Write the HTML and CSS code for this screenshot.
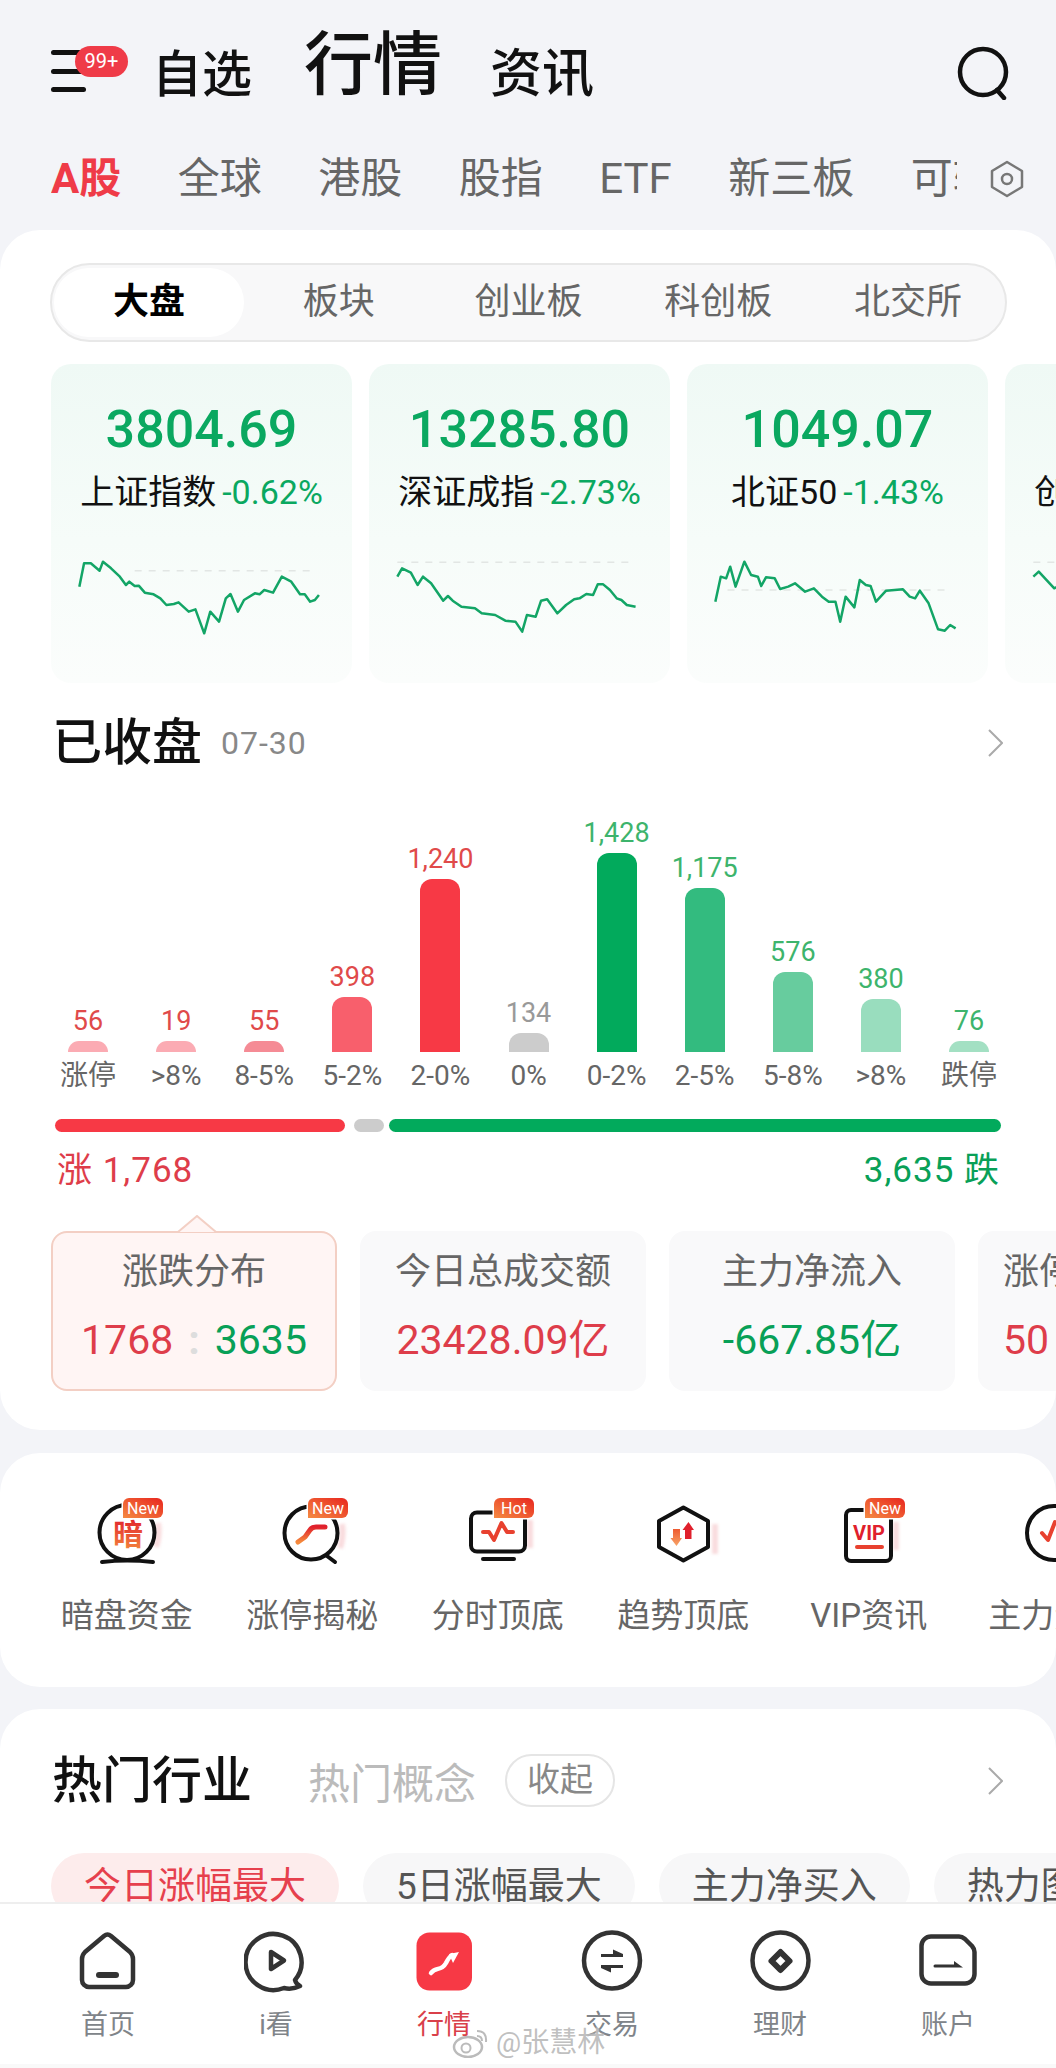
FILE: index.html
```html
<!DOCTYPE html>
<html lang="zh-CN">
<head>
    <meta charset="UTF-8">
    <meta name="viewport" content="width=device-width, initial-scale=1.0">
    <title>行情</title>
    <link rel="stylesheet" href="styles.css">
</head>
<body>

    <header class="top-bar">
        <div class="menu-btn">
            <span></span><span></span><span></span>
            <b class="menu-badge">99+</b>
        </div>
        <a class="top-link top-first">自选</a>
        <a class="top-link top-active">行情</a>
        <a class="top-link top-last">资讯</a>
        <svg class="search-icon" width="54" height="54" viewBox="0 0 54 54">
            <circle cx="27" cy="26" r="23" fill="none" stroke="#111" stroke-width="4.5"/>
            <path d="M41 44 L48 52" fill="none" stroke="#111" stroke-width="4.5" stroke-linecap="round"/>
        </svg>
    </header>

    <nav class="market-tabs">
        <div class="market-scroll">
            <a class="market-active">A股</a>
            <a>全球</a>
            <a>港股</a>
            <a>股指</a>
            <a>ETF</a>
            <a>新三板</a>
            <a>可转债</a>
        </div>
        <svg class="market-set" width="36" height="38" viewBox="0 0 36 38">
            <path d="M18 2 L33 11 V27 L18 36 L3 27 V11 Z" fill="none" stroke="#777" stroke-width="2.5" stroke-linejoin="round"/>
            <circle cx="18" cy="19" r="5" fill="none" stroke="#777" stroke-width="2.5"/>
        </svg>
    </nav>

    <section class="card card-market">
        <div class="segment">
            <a class="segment-active">大盘</a>
            <a>板块</a>
            <a>创业板</a>
            <a>科创板</a>
            <a>北交所</a>
        </div>

        <div class="index-row">
            <div class="index-card">
                <div class="index-num">3804.69</div>
                <div class="index-info"><span>上证指数</span><em>-0.62%</em></div>
                <svg class="spark" viewBox="76 540 446 360" preserveAspectRatio="none">
                    <line class="spark-base" x1="200" y1="662" x2="460" y2="662"/>
                    <polyline class="spark-line" points="118,710 125,640 135,640 148,662 153,635 165,655 178,680 187,705 192,695 200,708 206,707 215,728 228,733 238,745 247,765 258,762 265,757 280,785 290,778 303,850 312,785 325,815 335,745 342,732 353,785 362,750 378,730 385,733 392,720 405,728 418,680 432,695 445,733 452,733 460,755 467,750 473,735"/>
                </svg>
            </div>
            <div class="index-card">
                <div class="index-num">13285.80</div>
                <div class="index-info"><span>深证成指</span><em>-2.73%</em></div>
                <svg class="spark" viewBox="548 540 446 360" preserveAspectRatio="none">
                    <line class="spark-base" x1="590" y1="637" x2="935" y2="637"/>
                    <polyline class="spark-line" points="590,680 597,655 610,668 620,705 628,680 640,700 658,752 665,738 672,752 685,770 705,775 715,790 735,795 750,812 765,815 775,845 782,795 795,800 803,752 812,748 827,790 840,765 852,748 860,745 870,732 880,735 887,703 895,703 905,720 915,745 922,750 930,765 943,770"/>
                </svg>
            </div>
            <div class="index-card">
                <div class="index-num">1049.07</div>
                <div class="index-info"><span>北证50</span><em>-1.43%</em></div>
                <svg class="spark" viewBox="1020 540 446 360" preserveAspectRatio="none">
                    <line class="spark-base" x1="1080" y1="720" x2="1405" y2="720"/>
                    <polyline class="spark-line" points="1062,755 1070,680 1078,685 1084,650 1092,710 1105,635 1115,675 1125,680 1130,708 1137,682 1150,685 1158,717 1170,710 1180,700 1195,725 1208,715 1220,740 1230,755 1240,755 1247,815 1255,740 1268,772 1276,690 1285,705 1292,708 1300,755 1315,722 1340,718 1350,740 1358,745 1365,722 1378,760 1392,838 1402,842 1410,825 1418,835"/>
                </svg>
            </div>
            <div class="index-card">
                <div class="index-num">2356.42</div>
                <div class="index-info"><span>创业板指</span><em>-1.62%</em></div>
                <svg class="spark" viewBox="1492 540 446 360" preserveAspectRatio="none">
                    <line class="spark-base" x1="1534" y1="637" x2="1880" y2="637"/>
                    <polyline class="spark-line" points="1534,680 1542,665 1565,715 1580,700 1600,740"/>
                </svg>
            </div>
        </div>

        <div class="section-head">
            <h2>已收盘</h2>
            <span class="head-date">07-30</span>
            <svg class="chevron" width="15" height="28" viewBox="0 0 15 28"><polyline points="1,1 14,14 1,27"/></svg>
        </div>

        <div class="bars">
            <div class="bar-col"><span class="val-up">56</span><i class="bar b1"></i></div>
            <div class="bar-col"><span class="val-up">19</span><i class="bar b2"></i></div>
            <div class="bar-col"><span class="val-up">55</span><i class="bar b3"></i></div>
            <div class="bar-col"><span class="val-up">398</span><i class="bar b4"></i></div>
            <div class="bar-col"><span class="val-up">1,240</span><i class="bar b5"></i></div>
            <div class="bar-col"><span class="val-flat">134</span><i class="bar b6"></i></div>
            <div class="bar-col"><span class="val-down">1,428</span><i class="bar b7"></i></div>
            <div class="bar-col"><span class="val-down">1,175</span><i class="bar b8"></i></div>
            <div class="bar-col"><span class="val-down">576</span><i class="bar b9"></i></div>
            <div class="bar-col"><span class="val-down">380</span><i class="bar b10"></i></div>
            <div class="bar-col"><span class="val-down">76</span><i class="bar b11"></i></div>
        </div>
        <div class="bar-labels">
            <span>涨停</span><span>&gt;8%</span><span>8-5%</span><span>5-2%</span><span>2-0%</span><span>0%</span><span>0-2%</span><span>2-5%</span><span>5-8%</span><span>&gt;8%</span><span>跌停</span>
        </div>

        <div class="ratio">
            <i class="ratio-up"></i><i class="ratio-flat"></i><i class="ratio-down"></i>
        </div>
        <div class="ratio-text">
            <span class="text-up">涨 1,768</span>
            <span class="text-down">3,635 跌</span>
        </div>

        <div class="stat-row">
            <div class="stat-card stat-active">
                <svg class="stat-arrow" width="40" height="18" viewBox="0 0 40 18"><path d="M1 17 L20 1 L39 17"/></svg>
                <div class="stat-title">涨跌分布</div>
                <div class="stat-value"><span class="text-up">1768</span><b class="stat-colon">:</b><span class="text-down">3635</span></div>
            </div>
            <div class="stat-card">
                <div class="stat-title">今日总成交额</div>
                <div class="stat-value text-up">23428.09亿</div>
            </div>
            <div class="stat-card">
                <div class="stat-title">主力净流入</div>
                <div class="stat-value text-down">-667.85亿</div>
            </div>
            <div class="stat-card stat-left">
                <div class="stat-title">涨停跌停家数</div>
                <div class="stat-value text-up">50</div>
            </div>
        </div>
    </section>

    <section class="card card-tools">
        <div class="tool">
            <svg class="tool-icon" width="80" height="68" viewBox="0 0 80 68">
                <defs>
                    <linearGradient id="tagFill" x1="0" y1="1" x2="1" y2="0">
                        <stop offset="0" stop-color="#f58a42"/>
                        <stop offset="1" stop-color="#e8261f"/>
                    </linearGradient>
                    <linearGradient id="markFill" x1="0" y1="0" x2="0" y2="1">
                        <stop offset="0" stop-color="#e0202c"/>
                        <stop offset="1" stop-color="#f58a3c"/>
                    </linearGradient>
                </defs>
                <path class="icon-glow" d="M71 25 Q73 37 69 49"/>
                <circle class="icon-line" cx="40" cy="34.5" r="27.5"/>
                <path class="icon-line" d="M15 64 Q40 61 66 64"/>
                <text class="icon-char" x="41" y="47">暗</text>
                <path class="tag-bg" d="M36 6 a6 6 0 0 1 6-6 H70 a6 6 0 0 1 6 6 V14 a6 6 0 0 1-6 6 H36 Z"/>
                <text class="tag-text" x="56" y="15.5">New</text>
            </svg>
            <span>暗盘资金</span>
        </div>
        <div class="tool">
            <svg class="tool-icon" width="80" height="68" viewBox="0 0 80 68">
                <path class="icon-glow" d="M70 26 Q72 38 68 50"/>
                <circle class="icon-line" cx="39" cy="35" r="26.5"/>
                <path class="icon-line" d="M55 58 L63 64"/>
                <path class="icon-mark" d="M26 44 L33 39 L38 32 Q40 29 44 29 H53"/>
                <path class="tag-bg" d="M36 6 a6 6 0 0 1 6-6 H70 a6 6 0 0 1 6 6 V14 a6 6 0 0 1-6 6 H36 Z"/>
                <text class="tag-text" x="56" y="15.5">New</text>
            </svg>
            <span>涨停揭秘</span>
        </div>
        <div class="tool">
            <svg class="tool-icon" width="80" height="68" viewBox="0 0 80 68">
                <path class="icon-glow" d="M72 22 V50"/>
                <rect class="icon-line" x="13" y="14.5" width="54" height="39" rx="6"/>
                <path class="icon-line" d="M25 61 H56"/>
                <path class="icon-wave" d="M25 34 H31 L36 42 L43.5 25 L49 34 H55"/>
                <path class="tag-bg" d="M36 6 a6 6 0 0 1 6-6 H70 a6 6 0 0 1 6 6 V14 a6 6 0 0 1-6 6 H36 Z"/>
                <text class="tag-text" x="56" y="15.5">Hot</text>
            </svg>
            <span>分时顶底</span>
        </div>
        <div class="tool">
            <svg class="tool-icon" width="80" height="68" viewBox="0 0 80 68">
                <path class="icon-glow" d="M72 26 V56"/>
                <path class="icon-line" d="M40.4 9.5 L65 23 V49 L40.4 62.5 L16 49 V23 Z"/>
                <path d="M30 31 H37 V40 H39 L33.5 48 L27.5 40 H30 Z" fill="url(#arrowFill)"/>
                <path d="M45.5 24 L51 32 H48.5 V41 H42 V32 H39.5 Z" fill="#e0202c"/>
                <defs>
                    <linearGradient id="arrowFill" x1="0" y1="0" x2="0" y2="1">
                        <stop offset="0" stop-color="#ee5a30"/>
                        <stop offset="1" stop-color="#f7a468"/>
                    </linearGradient>
                </defs>
            </svg>
            <span>趋势顶底</span>
        </div>
        <div class="tool">
            <svg class="tool-icon" width="80" height="68" viewBox="0 0 80 68">
                <path class="icon-glow" d="M67 24 V52"/>
                <path class="icon-line" d="M36 12 H22 a5 5 0 0 0-5 5 V58 a5 5 0 0 0 5 5 H57 a5 5 0 0 0 5-5 V18"/>
                <text class="icon-vip" x="40" y="42">VIP</text>
                <path class="icon-wave" d="M28 49 H53"/>
                <path class="tag-bg" d="M36 6 a6 6 0 0 1 6-6 H70 a6 6 0 0 1 6 6 V14 a6 6 0 0 1-6 6 H36 Z"/>
                <text class="tag-text" x="56" y="15.5">New</text>
            </svg>
            <span>VIP资讯</span>
        </div>
        <div class="tool">
            <svg class="tool-icon" width="80" height="68" viewBox="0 0 80 68">
                <circle class="icon-line" cx="40" cy="35" r="27"/>
                <path class="icon-wave" d="M28 35 L34 42 L41 24"/>
            </svg>
            <span>主力资金</span>
        </div>
    </section>

    <section class="card card-hot">
        <div class="hot-head">
            <h2>热门行业</h2>
            <span class="hot-other">热门概念</span>
            <a class="hot-fold">收起</a>
            <svg class="chevron" width="15" height="28" viewBox="0 0 15 28"><polyline points="1,1 14,14 1,27"/></svg>
        </div>
        <div class="chip-row">
            <a class="chip chip-active">今日涨幅最大</a>
            <a class="chip">5日涨幅最大</a>
            <a class="chip">主力净买入</a>
            <a class="chip">热力图</a>
        </div>
    </section>

    <footer class="bottom-nav">
        <a class="nav-item">
            <svg width="64" height="64" viewBox="0 0 64 64">
                <path class="nav-line" d="M28 6 Q31.5 3 35 6 L54 22 Q57 25 57 29 V50 a7 7 0 0 1-7 7 H13 a7 7 0 0 1-7-7 V29 Q6 25 9 22 Z"/>
                <path class="nav-line nav-fat" d="M23 45 H40"/>
            </svg>
            <span>首页</span>
        </a>
        <a class="nav-item">
            <svg width="64" height="64" viewBox="0 0 64 64">
                <path class="nav-line" d="M51 50 A28 28 0 1 0 40 58 Q48 60 56 56 Q52 54 51 50 Z"/>
                <path class="nav-line" d="M27 22 L40 30.5 L27 39 Z"/>
            </svg>
            <span>i看</span>
        </a>
        <a class="nav-item nav-active">
            <svg width="64" height="64" viewBox="0 0 64 64">
                <rect x="4.5" y="2.5" width="55.5" height="58" rx="13" fill="#f73945"/>
                <path d="M19 43 C24 36 29 42 34 33 C36 29 37 27 40 25" fill="none" stroke="#fff" stroke-width="4.5" stroke-linecap="round"/>
                <path d="M37 24 L47 22 L41 33 Z" fill="#fff"/>
            </svg>
            <span>行情</span>
        </a>
        <a class="nav-item">
            <svg width="64" height="64" viewBox="0 0 64 64">
                <circle class="nav-line" cx="32" cy="30.5" r="28"/>
                <path d="M21 24 H43 V27 H21 Z M33 19.5 L43 24 V25 H33 Z M21 35 H43 V38 H21 Z M31 42.5 L21 38 V37 H31 Z" fill="#333"/>
            </svg>
            <span>交易</span>
        </a>
        <a class="nav-item">
            <svg width="64" height="64" viewBox="0 0 64 64">
                <circle class="nav-line" cx="32.5" cy="30.5" r="28"/>
                <path class="nav-line nav-diamond" d="M32.5 22 L41.5 31 L32.5 40 L23.5 31 Z"/>
            </svg>
            <span>理财</span>
        </a>
        <a class="nav-item">
            <svg width="64" height="64" viewBox="0 0 64 64">
                <path class="nav-line" d="M15 6.5 H43 Q46 6.5 49 9 L56 16 Q58.5 19 58.5 22 V44 a9.5 9.5 0 0 1-9.5 9.5 H15 a9.5 9.5 0 0 1-9.5-9.5 V16 a9.5 9.5 0 0 1 9.5-9.5 Z"/>
                <path d="M19 34.5 H38 V31 L47 37.5 H19 a1.5 1.5 0 0 1 0-3 Z" fill="#333"/>
            </svg>
            <span>账户</span>
        </a>

        <div class="watermark">
            <svg width="38" height="30" viewBox="0 0 38 30">
                <ellipse cx="16" cy="19" rx="14" ry="10" fill="none" stroke="#bbb" stroke-width="2.5"/>
                <circle cx="14" cy="20" r="4.5" fill="none" stroke="#bbb" stroke-width="2"/>
                <path d="M25 3 Q35 3 34 14 M25 8 Q30 8 30 13" fill="none" stroke="#bbb" stroke-width="2"/>
            </svg>
            <span>@张慧林</span>
        </div>
    </footer>

</body>
</html>
```
FILE: styles.css
```css
* {
    box-sizing: border-box;
}

body {
    margin: 0;
    width: 1056px;
    height: 2068px;
    position: relative;
    overflow: hidden;
    background-color: #f3f4f8;
    color: #111;
    font-family: Roboto, "Noto Sans CJK SC", sans-serif;
}

a {
    color: inherit;
    text-decoration: none;
}

h2 {
    margin: 0;
    font-size: 50px;
    font-weight: 500;
    line-height: 50px;
}

/* top bar */
.top-bar {
    height: 100px;
    padding: 0 46px 0 51px;
    display: flex;
    align-items: flex-end;
}

.menu-btn {
    width: 105px;
    height: 42px;
    margin-bottom: 8px;
    position: relative;
    display: flex;
    flex-direction: column;
    justify-content: space-between;
}

.menu-btn span {
    display: block;
    width: 35px;
    height: 5px;
    border-radius: 3px;
    background-color: #111;
}

.menu-badge {
    position: absolute;
    left: 24px;
    top: -4px;
    width: 53px;
    height: 31px;
    border-radius: 16px;
    background-color: #ef3b48;
    color: #fff;
    font-size: 20px;
    font-weight: 400;
    line-height: 31px;
    text-align: center;
}

.top-link {
    font-size: 50px;
    line-height: 50px;
    font-weight: 500;
    margin-right: 48px;
}

.top-first {
    margin-left: -4px;
    margin-right: 52px;
}

.top-active {
    font-size: 69px;
    line-height: 68px;
}

.top-last {
    font-size: 52px;
    line-height: 50px;
    margin-right: 0;
}

.search-icon {
    margin-left: auto;
}

/* market tabs */
.market-tabs {
    margin-top: 59px;
    padding-left: 51px;
    height: 40px;
    display: flex;
    align-items: center;
}

.market-scroll {
    width: 906px;
    overflow: hidden;
    display: flex;
    gap: 56.5px;
    font-size: 42px;
    line-height: 56px;
    color: #666;
    white-space: nowrap;
}

.market-scroll a {
    flex: none;
}

.market-active {
    color: #ef3b48;
    font-weight: 700;
}

.market-set {
    margin-left: 32px;
}

/* cards */
.card {
    background-color: #fff;
    border-radius: 40px;
    overflow: hidden;
}

.card-market {
    margin-top: 31px;
    padding: 33px 0 39px;
}

.segment {
    margin: 0 49px 0 50px;
    height: 79px;
    padding: 3px 2px;
    border: 2px solid #e8e8e8;
    border-radius: 40px;
    background-color: #f8f8f9;
    display: grid;
    grid-template-columns: repeat(5, 1fr);
    font-size: 36px;
    color: #666;
    text-align: center;
}

.segment a {
    line-height: 69px;
}

.segment .segment-active {
    background-color: #fff;
    border-radius: 36px;
    color: #000;
    font-weight: 700;
}

/* index cards */
.index-row {
    margin-top: 22px;
    padding-left: 51px;
    display: flex;
    gap: 17px;
    overflow: hidden;
}

.index-card {
    flex: none;
    width: 301px;
    height: 319px;
    padding-top: 40px;
    border-radius: 20px;
    background: linear-gradient(180deg, #eff9f5 0%, #f6fcf9 55%, #fbfdfc 100%);
    text-align: center;
    white-space: nowrap;
}

.index-num {
    height: 52px;
    font-size: 52px;
    line-height: 52px;
    font-weight: 500;
    color: #0aa860;
}

.index-info {
    height: 40px;
    margin-top: 16px;
    font-size: 34px;
    line-height: 40px;
    color: #111;
}

.index-info em {
    margin-left: 6px;
    font-style: normal;
    font-size: 34px;
    color: #0aa860;
}

.spark {
    display: block;
    width: 301px;
    height: 120px;
    margin-top: 18px;
}

.spark-line {
    fill: none;
    stroke: #13a566;
    stroke-width: 2.5px;
    stroke-linejoin: round;
    vector-effect: non-scaling-stroke;
}

.spark-base {
    stroke: #e2e6e4;
    stroke-width: 1.5px;
    stroke-dasharray: 7 7;
    vector-effect: non-scaling-stroke;
}

/* closed section */
.section-head {
    margin-top: 36px;
    padding: 0 53px 0 52px;
    height: 48px;
    display: flex;
    align-items: center;
}

.head-date {
    margin-left: 19px;
    font-size: 32px;
    letter-spacing: 1px;
    color: #888;
}

.chevron {
    margin-left: auto;
    fill: none;
    stroke: #aaa;
    stroke-width: 2px;
}

.bars {
    height: 285px;
    padding-left: 44px;
    display: grid;
    grid-template-columns: repeat(11, 88.1px);
}

.bar-col {
    display: flex;
    flex-direction: column;
    justify-content: flex-end;
    align-items: center;
    font-size: 27px;
    line-height: 28px;
}

.bar-col span {
    margin-bottom: 6px;
}

.val-up { color: #e04a4a; }
.val-flat { color: #999; }
.val-down { color: #3db46c; }

.bar {
    display: block;
    width: 40px;
    border-radius: 12px 12px 0 0;
}

.b1 { height: 11px; background-color: #fbabb3; }
.b2 { height: 11px; background-color: #fbabb3; }
.b3 { height: 11px; background-color: #f58b95; }
.b4 { height: 55px; background-color: #f85f6c; }
.b5 { height: 173px; background-color: #f73945; }
.b6 { height: 19px; background-color: #ccc; }
.b7 { height: 199px; background-color: #02aa5c; }
.b8 { height: 164px; background-color: #33bb7f; }
.b9 { height: 80px; background-color: #67cc9e; }
.b10 { height: 53px; background-color: #99ddbe; }
.b11 { height: 11px; background-color: #a3e0c3; }

.bar-labels {
    margin-top: 8px;
    height: 32px;
    padding-left: 44px;
    display: grid;
    grid-template-columns: repeat(11, 88.1px);
    font-size: 28px;
    line-height: 32px;
    color: #666;
    text-align: center;
}

.ratio {
    margin-top: 27px;
    padding: 0 55px;
    display: flex;
}

.ratio i {
    display: block;
    height: 13px;
    border-radius: 7px;
}

.ratio-up { width: 290px; background-color: #f73945; }
.ratio-flat { width: 30px; margin: 0 5px 0 9px; background-color: #ccc; }
.ratio-down { width: 612px; background-color: #02aa5c; }

.ratio-text {
    margin-top: 20px;
    padding: 0 56px 0 57px;
    display: flex;
    justify-content: space-between;
    font-size: 35px;
    line-height: 38px;
    letter-spacing: 1px;
}

.text-up { color: #de3d4a; }
.text-down { color: #08a057; }

/* stat cards */
.stat-row {
    margin-top: 23px;
    padding: 18px 0 0 51px;
    display: flex;
    gap: 23px;
    overflow: hidden;
}

.stat-card {
    flex: none;
    position: relative;
    width: 286px;
    height: 160px;
    padding-top: 18px;
    border: 2px solid #f9f9fa;
    border-radius: 16px;
    background-color: #f9f9fa;
    text-align: center;
    white-space: nowrap;
}

.stat-active {
    border-color: #f3cfc4;
    background-color: #fff5f4;
}

.stat-left {
    padding-left: 23px;
    text-align: left;
}

.stat-arrow {
    position: absolute;
    left: 124px;
    top: -18px;
    fill: #fff5f4;
    stroke: #f3cfc4;
    stroke-width: 2px;
}

.stat-title {
    font-size: 36px;
    line-height: 42px;
    color: #666;
}

.stat-value {
    margin-top: 26px;
    font-size: 41px;
    line-height: 42px;
}

.stat-colon {
    margin: 0 15px;
    color: #ddd;
    font-weight: 700;
}

/* tools */
.card-tools {
    margin-top: 23px;
    height: 234px;
    padding: 45px 0 0 34px;
    display: flex;
}

.tool {
    flex: none;
    width: 185.5px;
    display: flex;
    flex-direction: column;
    align-items: center;
    font-size: 33px;
    line-height: 40px;
    color: #666;
    white-space: nowrap;
}

.tool-icon {
    display: block;
    margin-bottom: 30px;
}

.icon-line {
    fill: none;
    stroke: #111;
    stroke-width: 4;
    stroke-linecap: round;
    stroke-linejoin: round;
}

.icon-glow {
    fill: none;
    stroke: #f9dcde;
    stroke-width: 6;
    filter: blur(1.5px);
}

.icon-mark {
    fill: none;
    stroke: url(#markFill);
    stroke-width: 5;
    stroke-linecap: round;
    stroke-linejoin: round;
}

.icon-wave {
    fill: none;
    stroke: #e8412f;
    stroke-width: 4;
    stroke-linecap: round;
    stroke-linejoin: round;
}

.icon-char {
    fill: url(#markFill);
    font-size: 30px;
    font-weight: 700;
    text-anchor: middle;
}

.icon-vip {
    fill: #e0202c;
    font-size: 20px;
    font-weight: 700;
    text-anchor: middle;
}

.tag-bg {
    fill: url(#tagFill);
    stroke: #fff;
    stroke-width: 3;
    paint-order: stroke;
}

.tag-text {
    fill: #fff;
    font-size: 16px;
    text-anchor: middle;
}

/* hot section */
.card-hot {
    margin-top: 22px;
    height: 400px;
    padding-top: 45px;
}

.hot-head {
    height: 53px;
    padding: 0 53px 0 52px;
    display: flex;
    align-items: center;
}

.hot-other {
    margin-left: 56px;
    font-size: 42px;
    color: #bbb;
}

.hot-fold {
    margin-left: 29px;
    width: 110px;
    height: 53px;
    border: 2px solid #e5e5e5;
    border-radius: 27px;
    font-size: 33px;
    line-height: 47px;
    color: #888;
    text-align: center;
}

.chip-row {
    margin-top: 46px;
    padding-left: 51px;
    display: flex;
    gap: 24px;
    white-space: nowrap;
}

.chip {
    flex: none;
    height: 66px;
    padding: 0 33px;
    border-radius: 33px;
    background-color: #f7f7f8;
    font-size: 37px;
    line-height: 67px;
    color: #555;
}

.chip-active {
    background-color: #fdecec;
    color: #e6404d;
}

/* bottom nav */
.bottom-nav {
    position: absolute;
    left: 0;
    right: 0;
    bottom: 0;
    height: 166px;
    padding: 26px 24px 0;
    border-top: 2px solid #eee;
    background: linear-gradient(180deg, #fff 0, #fff 160px, #f9f9f9 160px);
    display: grid;
    grid-template-columns: repeat(6, 1fr);
}

.nav-item {
    display: flex;
    flex-direction: column;
    align-items: center;
    font-size: 27px;
    line-height: 32px;
    color: #808489;
}

.nav-item svg {
    display: block;
    margin-bottom: 15px;
}

.nav-active {
    color: #d9404a;
}

.nav-line {
    fill: none;
    stroke: #333;
    stroke-width: 4.5;
    stroke-linecap: round;
    stroke-linejoin: round;
}

.nav-fat {
    stroke-width: 6;
}

.nav-diamond {
    stroke-width: 6;
}

.watermark {
    position: absolute;
    left: 452px;
    bottom: 10px;
    display: flex;
    align-items: center;
    gap: 6px;
    font-size: 28px;
    line-height: 30px;
    color: rgba(175, 175, 175, 0.8);
    text-shadow: 0 0 2px #fff;
}
```
